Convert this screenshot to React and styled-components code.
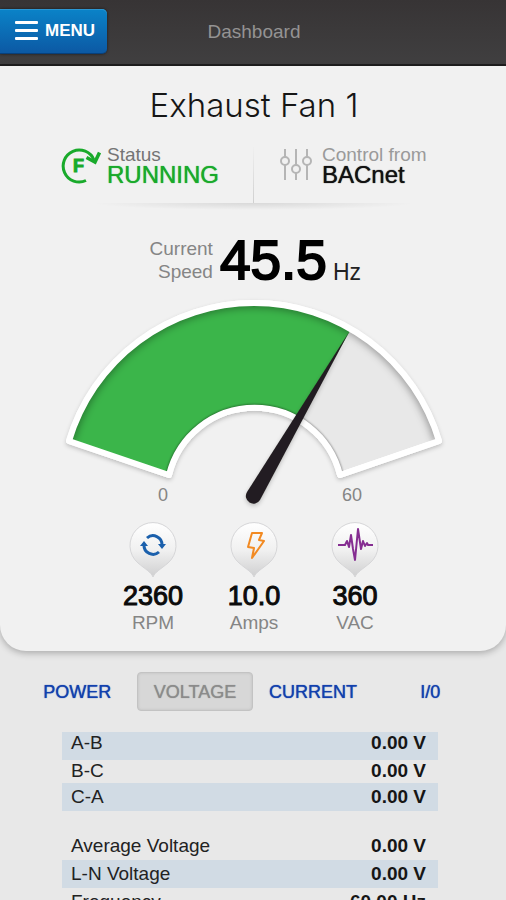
import React from "react";
import styled, { createGlobalStyle } from "styled-components";

const GlobalStyle = createGlobalStyle`
  *, *::before, *::after { box-sizing: border-box; }
  body {
    margin: 0;
    background: #e8e8e8;
    font-family: "Liberation Sans", Arial, sans-serif;
    color: #111;
  }
`;

const Page = styled.div`
  min-height: 100vh;
`;

const Header = styled.header`
  display: grid;
  grid-template-columns: 1fr auto 1fr;
  align-items: center;
  height: 66px;
  padding: 0 0 1px 2px;
  background: linear-gradient(#373435, #403f40);
  border-bottom: 2px solid #1f1e1f;
`;

const MenuButton = styled.button`
  display: flex;
  align-items: center;
  justify-self: start;
  gap: 7px;
  height: 45px;
  margin-left: -2px;
  padding: 0 12px 0 15px;
  border: 0;
  border-bottom: 1px solid #08407c;
  border-radius: 0 5px 5px 0;
  background: linear-gradient(#0a83c8, #0c59a4);
  box-shadow: 0 0 3px rgba(0, 0, 0, 0.6), inset 0 1px 0 #2b96d2;
  color: #fff;
  font: bold 17px "Liberation Sans", Arial, sans-serif;
  cursor: pointer;
`;

const HeaderTitle = styled.span`
  color: #949393;
  font-size: 19px;
`;

const Card = styled.main`
  display: flex;
  flex-direction: column;
  align-items: center;
  padding: 20px 0 16px 2px;
  border-radius: 0 0 26px 26px;
  background: #f1f1f1;
  box-shadow: 0 2px 7px rgba(0, 0, 0, 0.28);
`;

const DeviceName = styled.h1`
  margin: 0;
  font-family: Inter, "Liberation Sans", sans-serif;
  font-weight: 300;
  font-size: 33px;
  line-height: 38px;
  color: #161616;
`;

const StatusRow = styled.section`
  position: relative;
  display: grid;
  grid-template-columns: 1fr 1fr;
  width: 100%;
  height: 57px;
  margin-top: 22px;
  &::after {
    content: "";
    position: absolute;
    left: 18%;
    right: 18%;
    top: 100%;
    height: 7px;
    background: radial-gradient(50% 100% at 50% 0, rgba(0, 0, 0, 0.1), transparent);
  }
`;

const StatusItem = styled.div`
  display: flex;
  align-items: flex-start;
  gap: ${(p) => (p.$end ? "6px" : "10px")};
  justify-content: ${(p) => (p.$end ? "flex-end" : "flex-start")};
  padding: ${(p) => (p.$end ? "0 34px 0 0" : "0 0 0 26px")};
  border-right: ${(p) => (p.$end ? "1px solid" : "0")};
  border-image: linear-gradient(transparent, #cfcfcf) 1;
`;

const StatusText = styled.div`
  display: flex;
  flex-direction: column;
`;

const Label = styled.span`
  color: ${(p) => p.$color || "#858585"};
  font-size: 19px;
  line-height: ${(p) => (p.$tight ? "17px" : "24px")};
`;

const StatusValue = styled.strong`
  color: ${(p) => p.$color};
  font-size: 24px;
  font-weight: 400;
  line-height: 24px;
  text-shadow: 0 0 1px ${(p) => p.$color};
`;

const Speed = styled.section`
  display: flex;
  align-items: flex-end;
  height: 54px;
  margin-top: 30px;
`;

const SpeedLabel = styled.span`
  width: 66px;
  margin-bottom: 4px;
  color: #858585;
  font-size: 19px;
  line-height: 23px;
  text-align: right;
`;

const SpeedValue = styled.strong`
  margin-left: 7px;
  font-size: 55px;
  font-weight: 400;
  line-height: 54px;
  color: #000;
  -webkit-text-stroke: 2px #000;
`;

const SpeedUnit = styled.span`
  margin: 0 0 3px 6px;
  font-size: 23px;
  line-height: 24px;
  color: #222;
`;

const GaugeSvg = styled.svg`
  display: block;
  width: 80%;
  max-width: 400px;
  margin-top: 8px;
`;

const Metrics = styled.section`
  display: flex;
  justify-content: center;
  margin-top: 8px;
`;

const Metric = styled.div`
  display: flex;
  flex-direction: column;
  align-items: center;
  width: 101px;
`;

const MetricValue = styled.strong`
  margin-top: 2px;
  font-size: 27px;
  font-weight: 400;
  line-height: 30px;
  color: #0b0b0b;
  -webkit-text-stroke: 1px #0b0b0b;
`;

const Tabs = styled.nav`
  display: grid;
  grid-template-columns: 118fr 116fr 118fr 115fr;
  width: 93%;
  margin: 21px auto 0;
`;

const Tab = styled.button`
  height: 39px;
  padding: 2px 0 0;
  border: 1px solid ${(p) => (p.$active ? "#c3c3c3" : "transparent")};
  border-radius: 4px;
  background: ${(p) => (p.$active ? "#d7d7d7" : "transparent")};
  box-shadow: ${(p) => (p.$active ? "inset 0 0 3px #bdbdbd" : "none")};
  color: ${(p) => (p.$active ? "#8b8b8b" : "#1240ad")};
  font: 18px "Liberation Sans", Arial, sans-serif;
  text-shadow: 0 0 1px currentColor;
  cursor: pointer;
`;

const Readings = styled.table`
  width: calc(100% - 130px);
  margin: 21px 0 0 62px;
  border-collapse: collapse;
  font-size: 19px;
  line-height: 22px;
`;

const Group = styled.tbody`
  & + &::before {
    content: "";
    display: block;
    height: 24px;
  }
`;

const Reading = styled.tr`
  background: ${(p) => (p.$shaded ? "#d1dbe4" : "transparent")};
  height: ${(p) => p.$height}px;
  vertical-align: ${(p) => p.$align};
`;

const ReadingName = styled.th`
  padding: 0 0 0 9px;
  font-weight: 400;
  text-align: left;
  color: #222;
`;

const ReadingValue = styled.td`
  padding: 0 12px 0 0;
  font-weight: 700;
  text-align: right;
  color: #161616;
`;

function BarsIcon() {
  return (
    <svg width="23" height="20" viewBox="0 0 23 20" fill="#fff" aria-hidden="true">
      <rect y="0" width="23" height="3" rx="1" />
      <rect y="8" width="23" height="3" rx="1" />
      <rect y="16" width="23" height="3" rx="1" />
    </svg>
  );
}

function ForwardIcon() {
  return (
    <svg width="40" height="38" viewBox="0 0 40 38" fill="none" stroke="#19aa2b" strokeWidth="3" aria-hidden="true">
      <path d="M25 34.500A16 16 0 1 1 33 14" />
      <path d="M25.500 11.500l8.500 4.500 4.500-9.500" strokeWidth="3.500" />
      <text x="12" y="26" fill="#19aa2b" stroke="#19aa2b" strokeWidth="1" fontSize="18" fontWeight="700">F</text>
    </svg>
  );
}

function SlidersIcon() {
  return (
    <svg width="32" height="36" viewBox="0 0 32 36" fill="none" stroke="#b5b5b5" strokeWidth="2" aria-hidden="true">
      <path d="M5 3v8M5 19v15M16 3v16M16 27v7M27 3v8M27 19v15" />
      <circle cx="5" cy="15" r="4" />
      <circle cx="16" cy="23" r="4" />
      <circle cx="27" cy="15" r="4" />
    </svg>
  );
}

const sector = "M15 146A193 193 0 0 1 385 146L286 180A88 88 0 0 0 115 180Z";

function Gauge() {
  return (
    <GaugeSvg viewBox="0 0 400 218" role="img" aria-label="Speed 45.5 Hz of 60">
      <defs>
        <clipPath id="sector"><path d={sector} /></clipPath>
        <filter id="soft" x="-10%" y="-10%" width="120%" height="120%">
          <feGaussianBlur stdDeviation="4" />
        </filter>
        <filter id="edge" x="-10%" y="-10%" width="120%" height="120%">
          <feGaussianBlur stdDeviation="1" />
        </filter>
        <filter id="drop" x="-10%" y="-10%" width="120%" height="130%">
          <feDropShadow dx="0" dy="2" stdDeviation="2" floodOpacity="0.22" />
        </filter>
      </defs>
      <path d={sector} fill="#e8e8e8" stroke="#fff" strokeWidth="6" strokeLinejoin="round" filter="url(#drop)" />
      <g clipPath="url(#sector)">
        <path d="M200 202L296 36L250 -10H0V202Z" fill="#3bb54a" />
        <path d="M15 146A193 193 0 0 1 385 146" fill="none" stroke="#000" strokeOpacity="0.42" strokeWidth="8" filter="url(#soft)" />
        <path d="M115 180A88 88 0 0 1 286 180" fill="none" stroke="#000" strokeOpacity="0.45" strokeWidth="7" filter="url(#edge)" />
      </g>
      <path d={sector} fill="none" stroke="#fff" strokeWidth="6" strokeLinejoin="round" />
      <path d="M295 37L206 205A7.500 7.500 0 1 1 193 197Z" fill="#231f20" filter="url(#drop)" />
      <g fill="#858585" fontSize="18" textAnchor="middle">
        <text x="109" y="206">0</text>
        <text x="298" y="206">60</text>
      </g>
    </GaugeSvg>
  );
}

function Pin({ id, children }) {
  return (
    <svg width="50" height="58" viewBox="0 0 50 58" fill="none" aria-hidden="true">
      <defs>
        <linearGradient id={id} x1="0" y1="0" x2="0" y2="1">
          <stop offset="0" stopColor="#fff" />
          <stop offset="0.5" stopColor="#f1f1f1" />
          <stop offset="1" stopColor="#cfcfd0" />
        </linearGradient>
      </defs>
      <path d="M25 56C23 51 17 48 10 42A23 23 0 1 1 40 42C33 48 27 51 25 56Z" fill={`url(#${id})`} stroke="#d6d6d8" />
      {children}
    </svg>
  );
}

const metrics = [
  {
    id: "rpm", value: "2360", unit: "RPM",
    icon: (
      <g>
        <path d="M19 17A9 9 0 0 1 34 24M31 31A9 9 0 0 1 16 24" stroke="#1b60ac" strokeWidth="3" />
        <path d="M30 23h8l-4 5zM12 25h8l-4-5z" fill="#1b60ac" />
      </g>
    ),
  },
  {
    id: "amps", value: "10.0", unit: "Amps",
    icon: <path d="M23 12h10l-3 7 5 1-12 17 2-10-6-1z" stroke="#f28a22" strokeWidth="2" strokeLinejoin="round" />,
  },
  {
    id: "vac", value: "360", unit: "VAC",
    icon: <path d="M8 24h7l2-4 2 6 2-12 2 14 2 11 3-31 3 20 2-8 2 5 2-3 1 2h5" stroke="#852d91" strokeWidth="2" strokeLinejoin="round" />,
  },
];

const groups = [
  [
    { name: "A-B", value: "0.00 V", shaded: true, height: 28, align: "top" },
    { name: "B-C", value: "0.00 V", height: 23, align: "top" },
    { name: "C-A", value: "0.00 V", shaded: true, height: 28, align: "middle" },
  ],
  [
    { name: "Average Voltage", value: "0.00 V", height: 25, align: "top" },
    { name: "L-N Voltage", value: "0.00 V", shaded: true, height: 28, align: "middle" },
    { name: "Frequency", value: "60.00 Hz", height: 28, align: "middle" },
  ],
];

const tabs = ["POWER", "VOLTAGE", "CURRENT", "I/0"];

export default function App() {
  const [active, setActive] = React.useState("VOLTAGE");
  return (
    <Page>
      <GlobalStyle />
      <Header>
        <MenuButton><BarsIcon />MENU</MenuButton>
        <HeaderTitle>Dashboard</HeaderTitle>
      </Header>
      <Card>
        <DeviceName>Exhaust Fan 1</DeviceName>
        <StatusRow>
          <StatusItem $end>
            <ForwardIcon />
            <StatusText>
              <Label $tight $color="#747474">Status</Label>
              <StatusValue $color="#19aa2b">RUNNING</StatusValue>
            </StatusText>
          </StatusItem>
          <StatusItem>
            <SlidersIcon />
            <StatusText>
              <Label $tight $color="#9a9a9a">Control from</Label>
              <StatusValue $color="#111">BACnet</StatusValue>
            </StatusText>
          </StatusItem>
        </StatusRow>
        <Speed>
          <SpeedLabel>Current Speed</SpeedLabel>
          <SpeedValue>45.5</SpeedValue>
          <SpeedUnit>Hz</SpeedUnit>
        </Speed>
        <Gauge />
        <Metrics>
          {metrics.map((m) => (
            <Metric key={m.id}>
              <Pin id={m.id}>{m.icon}</Pin>
              <MetricValue>{m.value}</MetricValue>
              <Label>{m.unit}</Label>
            </Metric>
          ))}
        </Metrics>
      </Card>
      <Tabs>
        {tabs.map((t) => (
          <Tab key={t} $active={t === active} aria-pressed={t === active} onClick={() => setActive(t)}>{t}</Tab>
        ))}
      </Tabs>
      <Readings>
        {groups.map((rows, i) => (
          <Group key={i}>
            {rows.map((r) => (
              <Reading key={r.name} $shaded={r.shaded} $height={r.height} $align={r.align}>
                <ReadingName scope="row">{r.name}</ReadingName>
                <ReadingValue>{r.value}</ReadingValue>
              </Reading>
            ))}
          </Group>
        ))}
      </Readings>
    </Page>
  );
}
